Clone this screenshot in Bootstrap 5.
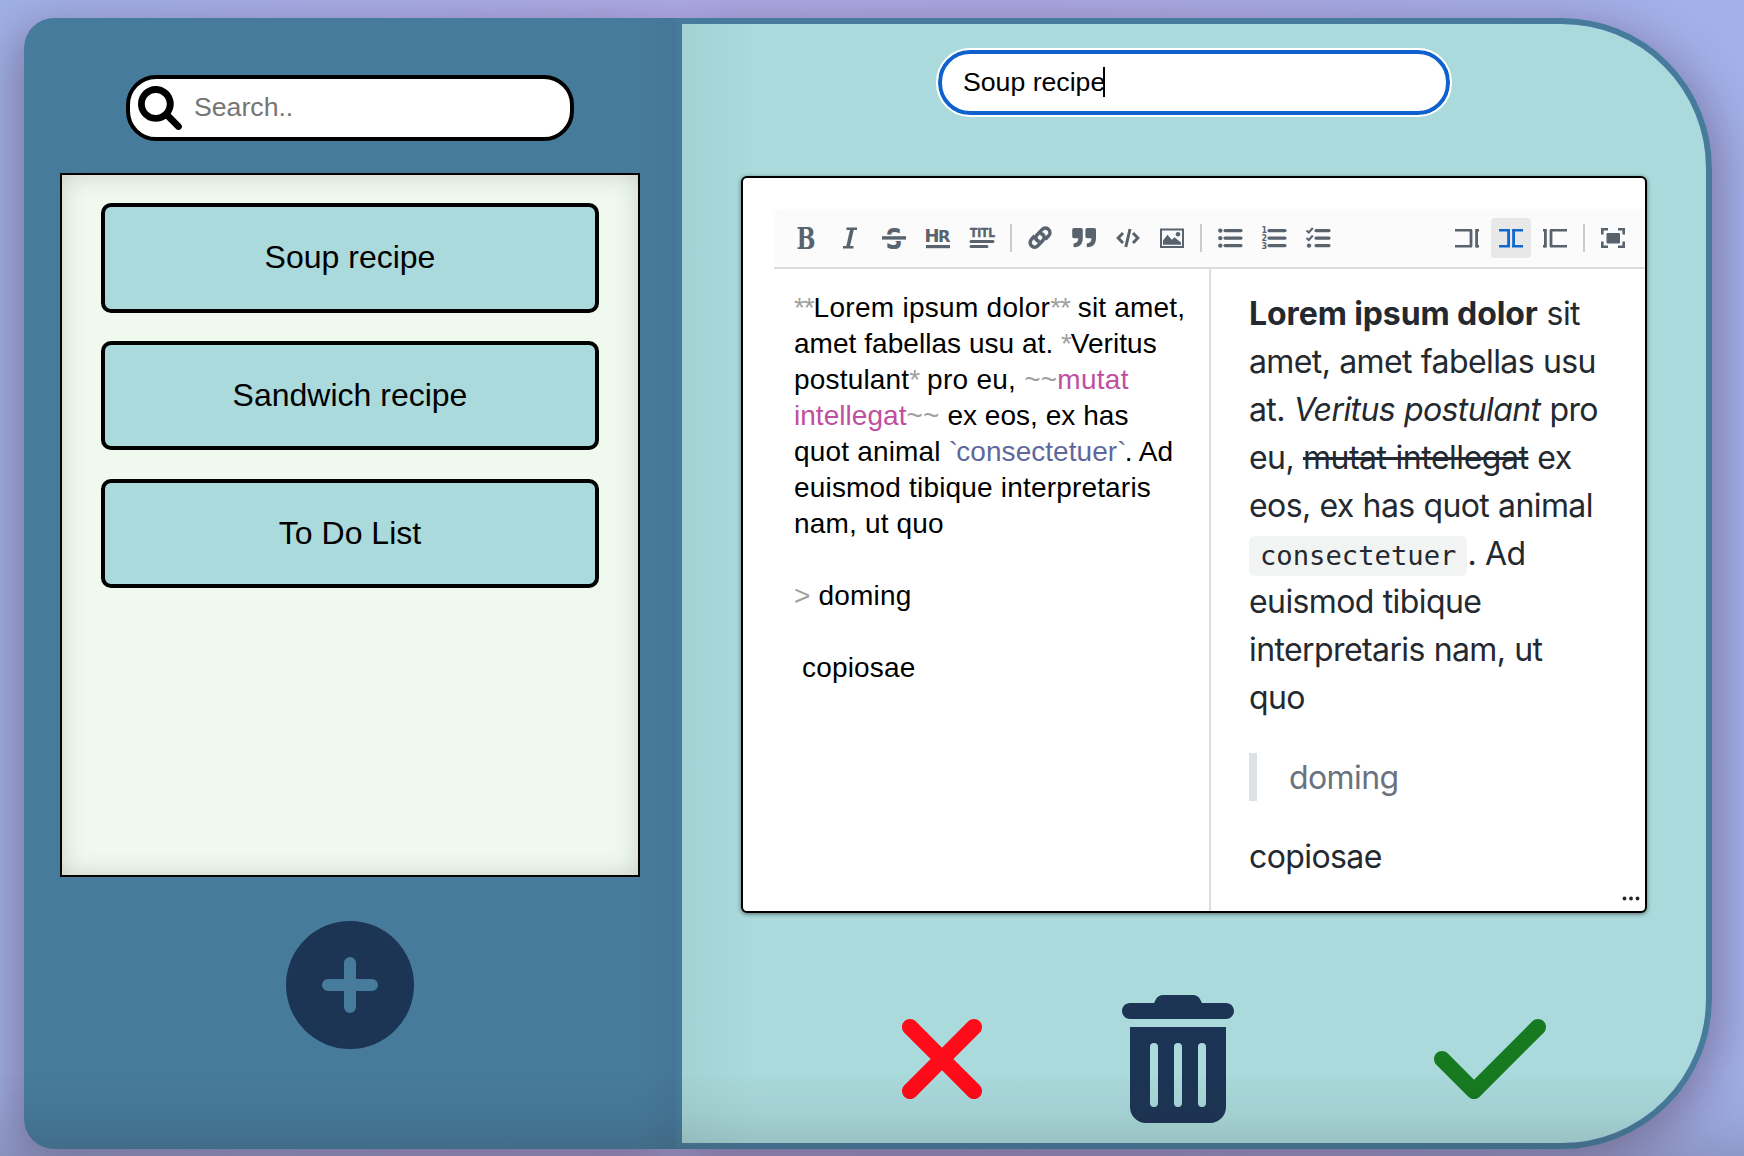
<!DOCTYPE html>
<html lang="en">
<head>
<meta charset="utf-8">
<meta name="viewport" content="width=device-width, initial-scale=1">
<title>Notes</title>
<link href="https://cdn.jsdelivr.net/npm/bootstrap@5.3.0/dist/css/bootstrap.min.css" rel="stylesheet">
<style>
  body {
    height: 1156px; overflow: hidden; color: #000;
    font-family: "Liberation Sans", Arial, sans-serif;
    background: linear-gradient(90deg, #a0b1e7 0, #ada9e4 39%, #aba7e1 58%, #a2b1ea 100%);
  }
  .app-shell { position: relative; isolation: isolate; margin: 18px 32px 0 24px; height: 1131px; }
  .page-shade { position: fixed; inset: auto 0 0 0; height: 84px; pointer-events: none; z-index: 5;
    background: linear-gradient(180deg, rgba(30,20,15,0), rgba(30,20,15,.05) 50%, rgba(30,20,15,.15)); }
  .cast { position: absolute; inset: 0 auto 0 0; width: 652px; z-index: -1; border-radius: 30px 0 0 30px;
    box-shadow: -10px 10px 46px rgba(60,20,40,.34); }
  .cast-right { inset: 0 0 0 auto; width: 1036px; border-radius: 0 150px 150px 0; box-shadow: 10px 10px 46px rgba(60,20,40,.34); }
  .side-panel { width: 652px; padding-top: 57px; border-radius: 30px 0 0 30px;
    background: linear-gradient(270deg, rgba(60,60,100,.09), rgba(60,60,100,0) 40px), #477b9c; }
  .main-panel { border: 6px solid #477b9c; border-radius: 0 150px 150px 0; padding-top: 26px;
    background: linear-gradient(90deg, rgba(80,110,110,.07), rgba(80,110,110,0) 75px), #aadadc; background-clip: padding-box; }
  .search-box { width: 448px; height: 66px; border: 4px solid #000; border-radius: 30px; padding-left: 8px; font-size: 26.67px; }
  .search-box input { font-size: 26.67px; padding: 0 0 1px 12px; line-height: 1; }
  .search-box input::placeholder { color: #757575; opacity: 1; }
  .note-list { width: 580px; height: 704px; margin-top: 32px; border: 2px solid #000; padding: 28px 39px; gap: 29px;
    background: #f0f9ee; box-shadow: inset 0 0 24px rgba(0,0,0,.16); }
  .note-item { height: 109.5px; border: 4px solid #000; border-radius: 10px; background: #aadadc; font-size: 32px; color: #000; padding: 0 0 1px; line-height: 1; }
  .note-item + .note-item { margin-top: -.6px; }
  .add-btn { margin-top: 44px; width: 128px; height: 128px; }
  .title-box { width: 512px; height: 65px; border: 4px solid #0f62ce; border-radius: 32px; outline: 2px solid #fff; padding: 0 0 2px 21px; font-size: 26.67px; }
  .caret { width: 2px; height: 30px; background: #000; margin-left: -2px; }
  .editor { width: 906px; height: 737px; margin-top: 61px; border: 2px solid #000; border-radius: 6px; padding: 31px 0 0 31px;
    box-shadow: 0 1px 4px rgba(0,0,0,.5); }
  .tool-bar { height: 60px; background: #fbfbfb; border-bottom: 2px solid #ddd; border-radius: 6px 0 0 0; padding: 0 12px; gap: 4px; }
  .tool { width: 40px; height: 40px; border-radius: 4px; color: #59636e; border: 0; background: none; padding: 0; }
  .tool svg { width: 24px; height: 24px; display: block; margin: auto; overflow: visible; }
  .tool-on { background: #e8e8e8; color: #1068d0; }
  .tool-sep { width: 2px; height: 28px; background: #ccc; margin: 0 4px; }
  .source { width: 437px; border-right: 2px solid #ddd; padding: 21px 0 0 20px; font-size: 28px; line-height: 36px; white-space: pre; letter-spacing: .18px; }
  .wide { letter-spacing: .28px; } .tight { letter-spacing: .04px; }
  .mk { color: #a0a0a0; } .ast { letter-spacing: -1.1px; } .pk { color: #c04f9f; } .cd { color: #5f689c; } .tick { letter-spacing: -1.7px; }
  .preview { padding: 21px 0 0 38px; font-family: Inter, sans-serif; font-size: 32px; line-height: 48px; color: #24292f;
    letter-spacing: -.6px; word-spacing: .5px; white-space: nowrap; }
  .preview b { letter-spacing: -.1px; word-spacing: 0; }
  .preview del { text-decoration-thickness: 3px; letter-spacing: -.48px; }
  .preview p { margin: 0 0 32px; }
  .preview code { font: 27.2px/36px "DejaVu Sans Mono", monospace; letter-spacing: 0; color: #24292f; background: #f2f4f4; border-radius: 6px; padding: 4px 11px 5px; }
  .preview blockquote { position: relative; top: 0; border-left: 8px solid #dde1e5; color: #6a737d; padding-left: 32px; margin: -1px 0 32px; font-size: 32px; padding-top: 1px; height: 48px; line-height: 48px; }
  .grip { right: 5px; bottom: 10px; }
  .actions { padding-left: 220px; margin-top: 82px; }
  .actions svg, .add-btn svg { height: 128px; display: block; }
  .gap-a { margin-left: 140px; } .gap-b { margin-left: 200px; }
</style>
<script src="https://cdn.jsdelivr.net/npm/bootstrap@5.3.0/dist/js/bootstrap.bundle.min.js"></script>
</head>
<body>
<div class="app-shell d-flex">
  <div class="cast"></div><div class="cast cast-right"></div>

  <aside class="side-panel d-flex flex-column align-items-center flex-shrink-0">
    <div class="search-box bg-white d-flex align-items-center">
      <svg class="flex-shrink-0" width="44" height="44" viewBox="0 0 512 512"><path d="M500.3 443.7l-119.7-119.7c27.22-40.41 40.65-90.9 33.46-144.7C401.8 87.79 326.8 13.32 235.2 1.723C99.01-15.51-15.51 99.01 1.724 235.2c11.6 91.64 86.08 166.7 177.6 178.9c53.8 7.189 104.3-6.236 144.7-33.46l119.7 119.7c15.62 15.62 40.95 15.62 56.57 0C515.9 484.7 515.9 459.3 500.3 443.7zM79.1 208c0-70.58 57.42-128 128-128s128 57.42 128 128c0 70.58-57.42 128-128 128S79.1 278.6 79.1 208z"/></svg>
      <input class="form-control border-0 shadow-none bg-transparent" type="text" placeholder="Search..">
    </div>
    <div class="note-list d-flex flex-column">
      <button class="note-item btn w-100">Soup recipe</button>
      <button class="note-item btn w-100">Sandwich recipe</button>
      <button class="note-item btn w-100">To Do List</button>
    </div>
    <button class="add-btn btn p-0 border-0" aria-label="Add">
      <svg width="128" viewBox="0 0 128 128"><circle cx="64" cy="64" r="64" fill="#1d3555"/><path d="M64 42v44M42 64h44" stroke="#477b9c" stroke-width="12" stroke-linecap="round"/></svg>
    </button>
  </aside>

  <main class="main-panel flex-grow-1">
    <div class="title-box bg-white d-flex align-items-center mx-auto"><span>Soup recipe</span><span class="caret"></span></div>

    <div class="editor bg-white mx-auto position-relative d-flex flex-column">
      <div class="tool-bar d-flex align-items-center flex-shrink-0">
        <button class="tool" aria-label="Bold"><svg viewBox="0 0 24 24" fill="currentColor"><text x="2.500" y="22.500" font-family="DejaVu Serif" font-weight="700" font-size="29" textLength="19" lengthAdjust="spacingAndGlyphs">B</text></svg></button>
        <button class="tool" aria-label="Italic"><svg viewBox="0 0 24 24" fill="none" stroke="currentColor"><path d="M8.500 2.700H19M5 21.300h10.500" stroke-width="2.600"/><path d="M14.200 2.500L9.800 21.500" stroke-width="3.600"/></svg></button>
        <button class="tool" aria-label="Strike"><svg viewBox="0 0 24 24" fill="currentColor"><text x="3.500" y="22.600" font-family="DejaVu Sans" font-weight="700" font-size="28" textLength="17" lengthAdjust="spacingAndGlyphs">S</text><path d="M0 8.600h24v6.400H0z" fill="#fbfbfb"/><path d="M0 10.200h24v3.400H0z"/></svg></button>
        <button class="tool" aria-label="Rule"><svg viewBox="0 0 24 24" fill="currentColor"><text x="-1.400" y="15.500" font-family="DejaVu Sans" font-weight="700" font-size="18.500" textLength="15" lengthAdjust="spacingAndGlyphs">H</text><text x="12" y="15.500" font-family="DejaVu Sans" font-weight="700" font-size="16.500" textLength="12.500" lengthAdjust="spacingAndGlyphs">R</text><path d="M0 19h24v3.200H0z"/></svg></button>
        <button class="tool" aria-label="Title"><svg viewBox="0 0 24 24" fill="currentColor"><text x="0" y="11.300" font-family="DejaVu Sans" font-weight="700" font-size="12.500" textLength="25" lengthAdjust="spacingAndGlyphs" stroke="currentColor" stroke-width=".5">TITL</text><path d="M1 14h22a1 1 0 0 1 0 3H1a1 1 0 0 1 0-3zM1 19h16a1 1 0 0 1 0 3H1a1 1 0 0 1 0-3z"/></svg></button>
        <span class="tool-sep"></span>
        <button class="tool" aria-label="Link"><svg viewBox="0 0 24 24" fill="none" stroke="currentColor" stroke-width="3.500"><path d="M8.300 14c-1-1.900-.6-3.700.7-5L14.200 3.400a4.500 4.500 0 0 1 6.400 6.400L17.300 13.400M15.700 9.200c1 1.900.6 3.700-.7 5L9.800 19.800a4.500 4.500 0 0 1-6.400-6.400L6.700 9.800M12.300 7.600c1.900.2 3.200 1 3.500 3M11.700 15.600c-1.900-.2-3.200-1-3.500-3"/></svg></button>
        <button class="tool" aria-label="Quote"><svg viewBox="0 0 24 24" fill="currentColor"><path d="M2 2h7a1.800 1.800 0 0 1 1.800 1.800v8C10.800 18 8 21.200 2.500 21.200a1 1 0 0 1-1-1v-2a1 1 0 0 1 .9-1C5.100 16.900 6.200 15 6.300 12.200H2A1.800 1.800 0 0 1 .2 10.400V3.800A1.800 1.800 0 0 1 2 2zM15.200 2h7A1.800 1.800 0 0 1 24 3.800v8C24 18 21.200 21.200 15.700 21.200a1 1 0 0 1-1-1v-2a1 1 0 0 1 .9-1c2.700-.3 3.800-2.200 3.900-5h-4.300a1.800 1.800 0 0 1-1.800-1.800V3.800A1.800 1.800 0 0 1 15.200 2z"/></svg></button>
        <button class="tool" aria-label="Code"><svg viewBox="0 0 24 24" fill="none" stroke="currentColor" stroke-width="3"><path d="M7 7l-4.800 5L7 17M17 7l4.800 5L17 17M14 3l-4.200 18"/></svg></button>
        <button class="tool" aria-label="Image"><svg viewBox="0 0 24 24" fill="currentColor" fill-rule="evenodd"><path d="M0 2.500h24v19.500H0zM2 4.500v15.500h20V4.500z"/><path d="M3 18.700v-4.200l4.500-5.700 4.300 5 2.700-2.500 6.500 5.200v2.200z"/><circle cx="18" cy="8.300" r="2.300"/></svg></button>
        <span class="tool-sep"></span>
        <button class="tool" aria-label="Bullets"><svg viewBox="0 0 24 24" fill="currentColor"><path d="M7 3h16a1 1 0 0 1 0 3.200H7A1 1 0 0 1 7 3zM7 10.500h16a1 1 0 0 1 0 3.200H7a1 1 0 0 1 0-3.200zM7 18h16a1 1 0 0 1 0 3.200H7A1 1 0 0 1 7 18z"/><circle cx="2.300" cy="4.600" r="2.200"/><circle cx="2.300" cy="12.100" r="2.200"/><circle cx="2.300" cy="19.600" r="2.200"/></svg></button>
        <button class="tool" aria-label="Numbers"><svg viewBox="0 0 24 24" fill="currentColor"><path d="M7 3h16a1 1 0 0 1 0 3.200H7A1 1 0 0 1 7 3zM7 10.500h16a1 1 0 0 1 0 3.200H7a1 1 0 0 1 0-3.200zM7 18h16a1 1 0 0 1 0 3.200H7A1 1 0 0 1 7 18z"/><g font-family="DejaVu Sans" font-weight="700" font-size="8"><text x="-.6" y="7.400">1</text><text x="-.6" y="15">2</text><text x="-.6" y="22.600">3</text></g></svg></button>
        <button class="tool" aria-label="Checks"><svg viewBox="0 0 24 24" fill="currentColor"><path d="M10 3h13a1 1 0 0 1 0 3.200H10A1 1 0 0 1 10 3zM10 10.500h13a1 1 0 0 1 0 3.200H10a1 1 0 0 1 0-3.200zM10 18h13a1 1 0 0 1 0 3.200H10a1 1 0 0 1 0-3.200z"/><circle cx="3" cy="19.600" r="2.200"/><path d="M.5 4.500l2.300 2L6.800 2M.5 12l2.300 2 4-4.500" fill="none" stroke="currentColor" stroke-width="2"/></svg></button>

        <button class="tool ms-auto" aria-label="Edit only"><svg viewBox="0 0 24 24" fill="none" stroke="currentColor"><path d="M0 4.300h17M0 20.300h17M24 4.300h-2.500M24 20.300h-2.500" stroke-width="2.400"/><path d="M16 4v16.500M21.600 3.100v18.400" stroke-width="2.800"/></svg></button>
        <button class="tool tool-on" aria-label="Live"><svg viewBox="0 0 24 24" fill="none" stroke="currentColor"><path d="M0 4.300h11M0 20.300h11M13 4.300h11M13 20.300h11" stroke-width="2.400"/><path d="M9.600 4v16.500M14.600 4v16.500" stroke-width="2.800"/></svg></button>
        <button class="tool" aria-label="Preview only"><svg viewBox="0 0 24 24" fill="none" stroke="currentColor"><path d="M7 4.300h17M7 20.300h17M0 4.300h2.500M0 20.300h2.500" stroke-width="2.400"/><path d="M8 4v16.500M2.400 3.100v18.400" stroke-width="2.800"/></svg></button>
        <span class="tool-sep"></span>
        <button class="tool" aria-label="Fullscreen"><svg viewBox="0 0 24 24" fill="none" stroke="currentColor" stroke-width="2.600"><path d="M1.300 8.500V3.300H7M17 3.300h5.700v5.200M22.700 15.500v5.200H17M7 20.700H1.300v-5.200"/><rect x="5.500" y="7" width="13.500" height="10.500" rx="1" fill="currentColor" stroke="none"/></svg></button>
      </div>
      <div class="d-flex flex-grow-1">
        <div class="source flex-shrink-0"><span class="mk ast">**</span><span class="wide">Lorem ipsum dolor</span><span class="mk ast">**</span> sit amet,
<span class="tight">amet fabellas usu at. </span><span class="mk ast">*</span><span class="tight">Veritus</span>
postulant<span class="mk ast">*</span> <span class="wide">pro eu, </span><span class="mk">~~</span><span class="pk wide">mutat</span>
<span class="pk tight">intellegat</span><span class="mk">~~</span><span class="tight"> ex eos, ex has</span>
quot animal <span class="cd tight"><span class="tick">`</span>consectetuer<span class="tick">`</span></span><span class="tight">. Ad</span>
euismod tibique interpretaris
nam, ut quo

<span class="mk">&gt;</span> doming

 copiosae</div>
        <div class="preview">
          <p><b>Lorem ipsum dolor</b> sit<br>amet, amet fabellas usu<br>at. <i>Veritus postulant</i> pro<br>eu, <del>mutat intellegat</del> ex<br>eos, ex has quot animal<br><code>consectetuer</code>. Ad<br>euismod tibique<br>interpretaris nam, ut<br>quo</p>
          <blockquote>doming</blockquote>
          <p class="mb-0">copiosae</p>
        </div>
      </div>
      <svg class="grip position-absolute" width="18" height="5" viewBox="0 0 18 5" fill="#24292f"><circle cx="2.500" cy="2.500" r="1.900"/><circle cx="9" cy="2.500" r="1.900"/><circle cx="15.500" cy="2.500" r="1.900"/></svg>
    </div>

    <div class="actions d-flex">
      <svg width="80" viewBox="0 0 320 512" fill="#ff0b19"><path d="M310.600 150.600c12.500-12.500 12.500-32.800 0-45.300s-32.800-12.500-45.300 0L160 210.700 54.600 105.400c-12.500-12.500-32.800-12.500-45.300 0s-12.500 32.800 0 45.300L114.700 256 9.400 361.400c-12.500 12.500-12.500 32.800 0 45.300s32.800 12.500 45.300 0L160 301.300 265.400 406.600c12.500 12.500 32.800 12.500 45.300 0s12.500-32.800 0-45.300L205.300 256 310.600 150.600z"/></svg>
      <svg class="gap-a" width="112" viewBox="0 0 448 512" fill="#1d3555"><path fill-rule="evenodd" d="M135.200 17.700L128 32H32C14.300 32 0 46.300 0 64s14.300 32 32 32h384c17.700 0 32-14.300 32-32s-14.300-32-32-32h-96l-7.200-14.300C307.400 6.800 296.300 0 284.200 0H163.800c-12.100 0-23.200 6.800-28.600 17.700zM32 128h384v320c0 35.300-28.700 64-64 64H96c-35.300 0-64-28.700-64-64zM112 208v224a16 16 0 0 0 32 0V208a16 16 0 0 0-32 0zM208 208v224a16 16 0 0 0 32 0V208a16 16 0 0 0-32 0zM304 208v224a16 16 0 0 0 32 0V208a16 16 0 0 0-32 0z"/></svg>
      <svg class="gap-b" width="112" viewBox="0 0 448 512" fill="#177a21"><path d="M438.600 105.400C451.100 117.900 451.100 138.100 438.600 150.600L182.600 406.600C170.100 419.100 149.900 419.100 137.400 406.600L9.372 278.600C-3.124 266.100-3.124 245.900 9.372 233.400C21.870 220.900 42.130 220.900 54.630 233.400L160 338.700L393.400 105.400C405.900 92.880 426.100 92.880 438.600 105.400z"/></svg>
    </div>
  </main>
</div>
<div class="page-shade"></div>
</body>
</html>
